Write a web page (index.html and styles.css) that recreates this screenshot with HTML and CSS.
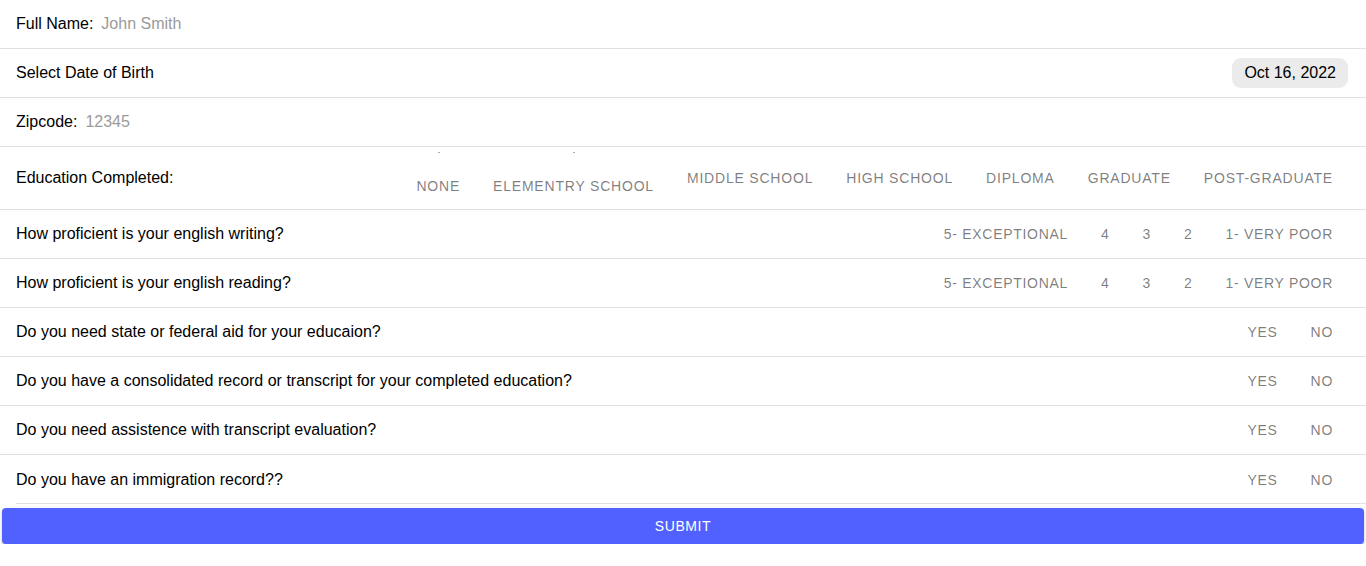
FILE: index.html
```html
<!DOCTYPE html>
<html>
<head>
<meta charset="utf-8">
<link rel="stylesheet" href="styles.css">
</head>
<body>
<div class="form">
  <div class="row">
    <span class="label">Full Name:</span><span class="value">John Smith</span>
  </div>
  <div class="row">
    <span class="label">Select Date of Birth</span>
    <span class="spacer"></span>
    <span class="chip">Oct 16, 2022</span>
  </div>
  <div class="row">
    <span class="label">Zipcode:</span><span class="value">12345</span>
  </div>
  <div class="row row-tall">
    <span class="label">Education Completed:</span>
    <span class="spacer"></span>
    <div class="group group-wide">
      <span class="opt opt-low"><i class="tick"></i>None</span>
      <span class="opt opt-low"><i class="tick"></i>Elementry School</span>
      <span class="opt">Middle School</span>
      <span class="opt">High School</span>
      <span class="opt">Diploma</span>
      <span class="opt">Graduate</span>
      <span class="opt">Post-Graduate</span>
    </div>
  </div>
  <div class="row">
    <span class="label">How proficient is your english writing?</span>
    <span class="spacer"></span>
    <div class="group">
      <span class="opt">5- Exceptional</span>
      <span class="opt">4</span>
      <span class="opt">3</span>
      <span class="opt">2</span>
      <span class="opt">1- Very Poor</span>
    </div>
  </div>
  <div class="row">
    <span class="label">How proficient is your english reading?</span>
    <span class="spacer"></span>
    <div class="group">
      <span class="opt">5- Exceptional</span>
      <span class="opt">4</span>
      <span class="opt">3</span>
      <span class="opt">2</span>
      <span class="opt">1- Very Poor</span>
    </div>
  </div>
  <div class="row">
    <span class="label">Do you need state or federal aid for your educaion?</span>
    <span class="spacer"></span>
    <div class="group"><span class="opt">Yes</span><span class="opt">No</span></div>
  </div>
  <div class="row">
    <span class="label">Do you have a consolidated record or transcript for your completed education?</span>
    <span class="spacer"></span>
    <div class="group"><span class="opt">Yes</span><span class="opt">No</span></div>
  </div>
  <div class="row">
    <span class="label">Do you need assistence with transcript evaluation?</span>
    <span class="spacer"></span>
    <div class="group"><span class="opt">Yes</span><span class="opt">No</span></div>
  </div>
  <div class="row row-last">
    <span class="label">Do you have an immigration record??</span>
    <span class="spacer"></span>
    <div class="group"><span class="opt">Yes</span><span class="opt">No</span></div>
  </div>
  <div class="actions">
    <button class="submit">Submit</button>
  </div>
</div>
</body>
</html>
```
FILE: styles.css
```css
* { box-sizing: border-box; }
body {
  margin: 0;
  font-family: "Liberation Sans", Arial, sans-serif;
  color: #000;
  background: #fff;
}
.form {
  display: flex;
  flex-direction: column;
}
.row {
  display: flex;
  align-items: center;
  height: 49px;
  padding: 0 16px;
  border-bottom: 1px solid #e0e0e0;
  font-size: 16px;
}
.row-tall { height: 63px; }
.row-last {
  border-bottom: none;
  position: relative;
}
.row-last::after {
  content: "";
  position: absolute;
  left: 16px;
  right: 0;
  bottom: 0;
  height: 1px;
  background: #e0e0e0;
}
.label { white-space: nowrap; }
.value {
  margin-left: 8px;
  color: #9a9a9a;
}
.spacer { flex: 1; }
.chip {
  display: inline-flex;
  align-items: center;
  height: 30px;
  padding: 0 12px;
  margin-right: 2px;
  background: #ebebeb;
  border-radius: 9px;
  font-size: 16px;
}
.group {
  display: flex;
  align-items: center;
  margin-right: 1px;
  letter-spacing: 0.7px;
}
.group-wide { letter-spacing: 0.8px; }
.opt {
  position: relative;
  padding: 0 16.5px;
  font-size: 14px;
  text-transform: uppercase;
  color: rgba(0, 0, 0, 0.52);
  white-space: nowrap;
  line-height: 16px;
}
.opt:last-child { padding-right: 16px; }
.opt-low { padding-top: 16px; }
.tick {
  position: absolute;
  top: -10px;
  left: 50%;
  width: 2px;
  height: 1px;
  background: #aaa;
}
.actions {
  padding: 4px 2px 0;
}
.submit {
  display: block;
  width: 100%;
  height: 36px;
  border: none;
  border-radius: 4px;
  background: #5161ff;
  color: #fff;
  font-family: "Liberation Sans", Arial, sans-serif;
  font-size: 14px;
  letter-spacing: 0.6px;
  text-transform: uppercase;
  box-shadow: 0 3px 1px -2px rgba(0,0,0,0.2), 0 2px 2px 0 rgba(0,0,0,0.14), 0 1px 5px 0 rgba(0,0,0,0.12);
}
```
